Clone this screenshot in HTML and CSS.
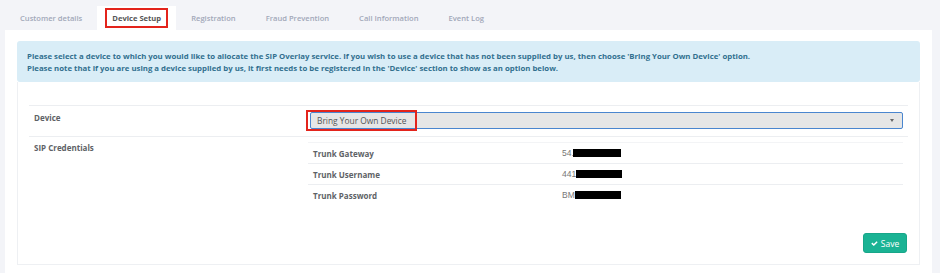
FILE: index.html
```html
<!DOCTYPE html>
<html lang="en">
<head>
    <meta charset="UTF-8">
    <title>Device Setup</title>
    <link rel="stylesheet" href="styles.css">
</head>
<body>

    <ul class="tabs">
        <li><a href="#">Customer details</a></li>
        <li class="active"><a href="#"><span class="hl">Device Setup</span></a></li>
        <li><a href="#">Registration</a></li>
        <li><a href="#">Fraud Prevention</a></li>
        <li><a href="#">Call Information</a></li>
        <li><a href="#">Event Log</a></li>
    </ul>

    <div class="panel">
        <div class="alert">
            Please select a device to which you would like to allocate the SIP Overlay service. If you wish to use a device that has not been supplied by us, then choose 'Bring Your Own Device' option.<br>
            Please note that if you are using a device supplied by us, it first needs to be registered in the 'Device' section to show as an option below.
        </div>

        <div class="card">
            <table class="form-table">
                <tr>
                    <th>Device</th>
                    <td>
                        <div class="select">
                            <span class="hl-select">Bring Your Own Device</span>
                            <span class="caret"></span>
                        </div>
                    </td>
                </tr>
                <tr>
                    <th>SIP Credentials</th>
                    <td>
                        <table class="creds">
                            <tr>
                                <th>Trunk Gateway</th>
                                <td>54.<span class="redact first"></span></td>
                            </tr>
                            <tr>
                                <th>Trunk Username</th>
                                <td>441<span class="redact"></span></td>
                            </tr>
                            <tr>
                                <th>Trunk Password</th>
                                <td>BM<span class="redact"></span></td>
                            </tr>
                        </table>
                    </td>
                </tr>
            </table>

            <div class="actions">
                <button type="button" class="btn-save">
                    <svg viewBox="0 0 1792 1792" width="7" height="7"><path fill="#fff" d="M1671 566q0 40-28 68l-724 724-136 136q-28 28-68 28t-68-28l-136-136-362-362q-28-28-28-68t28-68l136-136q28-28 68-28t68 28l294 295 656-657q28-28 68-28t68 28l136 136q28 28 28 68z"/></svg>
                    Save
                </button>
            </div>
        </div>
    </div>

</body>
</html>
```

FILE: styles.css
```css
body {
    font-family: "Open Sans", Arial, sans-serif;
    background-color: #f3f4f8;
    margin: 0;
    padding: 0;
    color: #676a6c;
}

/* tabs */

.tabs {
    list-style: none;
    margin: 0;
    padding: 6px 0 0 5px;
    display: flex;
}

.tabs li {
    height: 24px;
}

.tabs a {
    display: block;
    padding: 0 15px;
    line-height: 24px;
    font-size: 7.6px;
    font-weight: 600;
    color: #a2a8b8;
    text-decoration: none;
}

.tabs li.active {
    background-color: #fff;
}

.tabs li.active a {
    color: #555;
    font-weight: 700;
}

.hl {
    border: 2px solid #e3241c;
    padding: 3px 5px;
    margin: 0 -7px;
}

/* panel */

.panel {
    background-color: #fff;
    margin: 0 8px 0 5px;
    padding: 11px 12px 0;
    min-height: 240px;
}

.alert {
    background-color: #d9edf7;
    color: #31708f;
    border-radius: 3px;
    padding: 9px 10px 8px;
    font-size: 7.8px;
    font-weight: 700;
    line-height: 12px;
}

.card {
    border: 1px solid #eef0f3;
    border-top: 0;
    padding: 23px 11px 11px;
}

.form-table {
    width: 100%;
    border-collapse: collapse;
    font-size: 8px;
}

.form-table > tbody > tr > th,
.form-table > tbody > tr > td {
    border-top: 1px solid #eceef1;
    text-align: left;
    vertical-align: top;
    padding: 6px 5px 7px;
}

.form-table > tbody > tr > th {
    width: 266px;
    font-weight: 700;
    color: #5e6266;
    line-height: 11px;
}

.form-table > tbody > tr:nth-child(2) > td {
    padding: 5px 5px 0 3px;
}

.form-table > tbody > tr:nth-child(2) > th {
    padding-top: 5px;
}

/* select */

.select {
    position: relative;
    height: 15px;
    border: 1px solid #4a86cf;
    border-radius: 2px;
    background-color: #e6e6e6;
    padding-left: 6px;
    font-size: 8.4px;
    line-height: 15px;
    color: #555;
}

.hl-select {
    border: 2px solid #e3241c;
    padding: 3px 9px;
    margin: 0 -11px;
}

.caret {
    position: absolute;
    right: 8px;
    top: 6px;
    border-left: 2.5px solid transparent;
    border-right: 2.5px solid transparent;
    border-top: 3px solid #666;
}

/* credentials */

.creds {
    width: 100%;
    border-collapse: collapse;
}

.creds th,
.creds td {
    border-top: 1px solid #eceef1;
    text-align: left;
    padding: 5px 5px 4px;
    line-height: 11px;
}

.creds tr:first-child th,
.creds tr:first-child td {
    border-top-color: #f3f4f6;
}

.creds th {
    width: 239px;
    font-weight: 700;
    color: #5e6266;
}

.creds td {
    font-family: "Liberation Sans", Arial, sans-serif;
    color: #777;
    font-size: 8.5px;
}

.redact {
    display: inline-block;
    width: 46px;
    height: 8px;
    background-color: #000;
    vertical-align: -1px;
}

.redact.first {
    width: 48px;
    margin-left: -1px;
}

/* save */

.actions {
    display: flex;
    justify-content: flex-end;
    margin-top: 28px;
}

.btn-save {
    display: flex;
    align-items: center;
    gap: 3px;
    height: 20px;
    width: 44px;
    justify-content: center;
    margin-right: 1px;
    background-color: #1ab394;
    border: 1px solid #18a689;
    border-radius: 3px;
    color: #fff;
    font-family: "Open Sans", Arial, sans-serif;
    font-size: 8.5px;
    padding: 0;
}
```
